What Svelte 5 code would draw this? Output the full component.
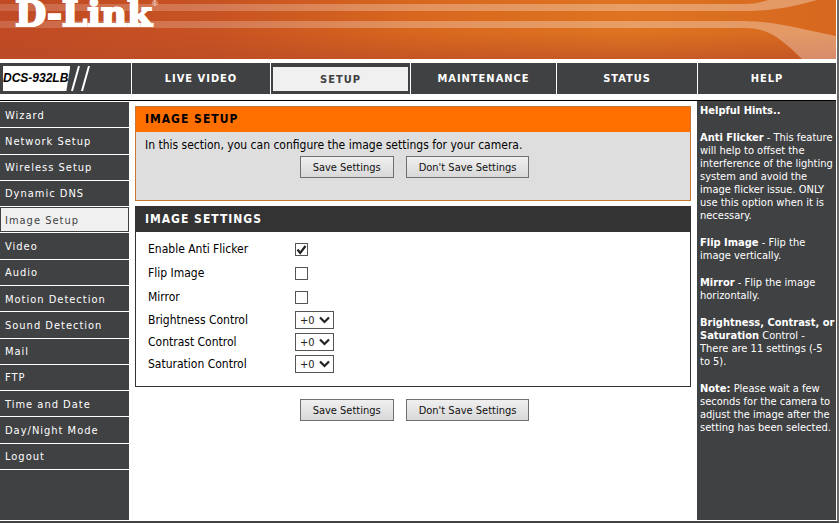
<script lang="ts">
	const tabs = ['LIVE VIDEO', 'SETUP', 'MAINTENANCE', 'STATUS', 'HELP'];
	const activeTab = 'SETUP';

	const menu = [
		'Wizard',
		'Network Setup',
		'Wireless Setup',
		'Dynamic DNS',
		'Image Setup',
		'Video',
		'Audio',
		'Motion Detection',
		'Sound Detection',
		'Mail',
		'FTP',
		'Time and Date',
		'Day/Night Mode',
		'Logout'
	];
	const activeItem = 'Image Setup';

	// -5 to +5
	const levels = Array.from({ length: 11 }, (_, i) => i - 5);

	let toggles = $state([
		{ id: 'flicker', label: 'Enable Anti Flicker', on: true },
		{ id: 'flip', label: 'Flip Image', on: false },
		{ id: 'mirror', label: 'Mirror', on: false }
	]);

	let controls = $state([
		{ id: 'brightness', label: 'Brightness Control', value: 0 },
		{ id: 'contrast', label: 'Contrast Control', value: 0 },
		{ id: 'saturation', label: 'Saturation Control', value: 0 }
	]);

	function reset() {
		toggles.forEach((t) => (t.on = t.id === 'flicker'));
		controls.forEach((c) => (c.value = 0));
	}
</script>

{#snippet buttons()}
	<div class="buttons">
		<button type="button">Save Settings</button>
		<button type="button" onclick={reset}>Don't Save Settings</button>
	</div>
{/snippet}

<div class="page">
	<header class="banner">
		<svg class="art" viewBox="0 0 836 59" preserveAspectRatio="none" aria-hidden="true">
			<defs>
				<linearGradient id="base">
					<stop offset="0" stop-color="#c04a24" />
					<stop offset="0.25" stop-color="#c75222" />
					<stop offset="0.5" stop-color="#d8671e" />
					<stop offset="0.75" stop-color="#de7421" />
					<stop offset="1" stop-color="#d6681f" />
				</linearGradient>
				<linearGradient id="shade" x2="0" y2="1">
					<stop offset="0.55" stop-color="#b84a28" stop-opacity="0" />
					<stop offset="1" stop-color="#b84a28" stop-opacity="0.6" />
				</linearGradient>
				<linearGradient id="beam">
					<stop offset="0" stop-color="#fff" stop-opacity="0.16" />
					<stop offset="0.5" stop-color="#fff" stop-opacity="0.28" />
					<stop offset="1" stop-color="#fff" stop-opacity="0.32" />
				</linearGradient>
			</defs>
			<rect width="836" height="59" fill="url(#base)" />
			<rect width="836" height="59" fill="url(#shade)" />
			<path fill="url(#beam)" d="M0 4H745C755 4 762 2 768 0H817C795 6 775 11 745 11H0Z" />
			<path fill="url(#beam)" d="M0 21H745C780 22 800 29 836 36V59H802C780 38 768 28 745 28H0Z" />
		</svg>
		<div class="brand">D-Link<sup>®</sup></div>
	</header>

	<nav class="tabs">
		<div class="model">
			<span>DCS-932LB</span>
			<svg width="22" height="25" viewBox="0 0 22 25" aria-hidden="true">
				<path d="M9 0L2 25M19 0L12 25" stroke="#fff" stroke-width="2" />
			</svg>
		</div>
		{#each tabs as tab}
			<a href="#top" class:active={tab === activeTab}>{tab}</a>
		{/each}
	</nav>

	<div class="body">
		<aside class="side">
			<ul>
				{#each menu as item}
					<li><a href="#top" class:active={item === activeItem}>{item}</a></li>
				{/each}
			</ul>
		</aside>

		<main>
			<section class="intro">
				<h1>IMAGE SETUP</h1>
				<p>In this section, you can configure the image settings for your camera.</p>
				{@render buttons()}
			</section>

			<section class="settings">
				<h2>IMAGE SETTINGS</h2>
				<div class="rows">
					{#each toggles as t}
						<div class="row">
							<label for={t.id}>{t.label}</label>
							<span class="check">
								<input type="checkbox" id={t.id} bind:checked={t.on} />
								{#if t.on}
									<svg viewBox="0 0 13 13" aria-hidden="true">
										<path d="M2.5 6.5L5.2 10L10.5 3" fill="none" stroke="#222" stroke-width="2.2" />
									</svg>
								{/if}
							</span>
						</div>
					{/each}
					{#each controls as c}
						<div class="row short">
							<label for={c.id}>{c.label}</label>
							<span class="drop">
								<select id={c.id} bind:value={c.value}>
									{#each levels as n}
										<option value={n}>{n < 0 ? n : `+${n}`}</option>
									{/each}
								</select>
								<svg viewBox="0 0 11 8" aria-hidden="true">
									<path d="M1 1.5L5.5 6L10 1.5" fill="none" stroke="#222" stroke-width="2.2" />
								</svg>
							</span>
						</div>
					{/each}
				</div>
			</section>

			{@render buttons()}
		</main>

		<aside class="hints">
			<p><b>Helpful Hints..</b></p>
			<p>
				<b>Anti Flicker</b> - This feature will help to offset the interference of the lighting
				system and avoid the image flicker issue. ONLY use this option when it is necessary.
			</p>
			<p><b>Flip Image</b> - Flip the image vertically.</p>
			<p><b>Mirror</b> - Flip the image horizontally.</p>
			<p>
				<b>Brightness, Contrast, or Saturation</b> Control - There are 11 settings (-5 to 5).
			</p>
			<p>
				<b>Note:</b> Please wait a few seconds for the camera to adjust the image after the
				setting has been selected.
			</p>
		</aside>
	</div>
</div>

<style>
	:global(body) {
		margin: 0;
		background: #fff;
	}

	.page {
		margin-right: 1px;
		padding-right: 1px;
		border-right: 2px solid #6b6b6b;
		border-bottom: 2px solid #404143;
		font-family: Tahoma, 'DejaVu Sans Condensed', 'DejaVu Sans', sans-serif;
		font-size: 12px;
		color: #000;
	}

	h1,
	h2,
	p,
	ul {
		margin: 0;
		padding: 0;
	}

	a {
		text-decoration: none;
	}

	/* banner */
	.banner {
		position: relative;
		height: 59px;
		overflow: hidden;
	}

	.art {
		display: block;
		width: 100%;
		height: 100%;
	}

	.brand {
		position: absolute;
		left: 15px;
		bottom: 32px;
		font: bold 36px/28px 'DejaVu Serif', serif;
		color: #fff;
		-webkit-text-stroke: 2px #fff;
	}

	.brand sup {
		font: 8px/8px 'Liberation Sans', sans-serif;
		vertical-align: 20px;
		-webkit-text-stroke: 0;
	}

	/* top navigation */
	.tabs {
		display: grid;
		grid-template-columns: 131px 138fr 139fr 145fr 140fr 138fr;
		gap: 1px;
		height: 31px;
		margin: 4px 0 6px;
	}

	.tabs a,
	.model {
		display: flex;
		align-items: center;
		background: #404143;
	}

	.tabs a {
		justify-content: center;
		border: 0 solid #404143;
		font-size: 11px;
		font-weight: bold;
		letter-spacing: 1px;
		color: #fff;
	}

	.tabs a.active {
		border-width: 4px 2px 3px;
		background: #f0f0f0;
		color: #404143;
	}

	.model {
		padding-left: 3px;
	}

	.model span {
		padding: 0 2px 0 0;
		background: #fff;
		clip-path: polygon(0 0, 100% 0, calc(100% - 4px) 100%, 0 100%);
		font: italic bold 12px/25px 'Liberation Sans Narrow', 'Liberation Sans', sans-serif;
		color: #000;
	}

	/* columns */
	.body {
		display: grid;
		grid-template-columns: 129px 1fr 139px;
		gap: 6px;
		min-height: 419px;
		padding-bottom: 1px;
		border-top: 1px solid #000;
	}

	.side {
		margin-top: 1px;
		background: #404143;
	}

	.side ul {
		display: grid;
		grid-auto-rows: 1fr;
		min-height: 368px;
		list-style: none;
	}

	.side li {
		display: grid;
		border-bottom: 1px solid #fff;
	}

	.side a {
		display: flex;
		align-items: center;
		padding: 1px 0 0 5px;
		font-size: 11px;
		letter-spacing: 1px;
		color: #fff;
	}

	.side a.active {
		border: 1px solid #404143;
		padding-left: 4px;
		background: #f0f0f0;
		color: #404143;
	}

	main {
		padding-top: 5px;
	}

	h1,
	h2 {
		padding-left: 9px;
		font-size: 12px;
		line-height: 25px;
		letter-spacing: 1px;
	}

	.intro {
		min-height: 93px;
		border: 1px solid #c87830;
		background: #dedede;
	}

	h1 {
		background: #ff6f00;
	}

	.intro p {
		padding: 5px 9px 3px;
		line-height: 16px;
	}

	.settings {
		margin: 5px 0 12px;
		border: 1px solid #333;
	}

	h2 {
		background: #333;
		color: #fff;
	}

	.rows {
		padding: 5px 12px 11px;
	}

	.row {
		display: grid;
		grid-template-columns: 147px 1fr;
		align-items: center;
		height: 24px;
	}

	.row.short {
		height: 22px;
	}

	.check,
	.drop {
		position: relative;
		display: flex;
	}

	.check input {
		appearance: none;
		width: 13px;
		height: 13px;
		margin: 0;
		border: 1px solid #555;
		background: #fff;
	}

	.check svg {
		position: absolute;
		left: 0;
		top: 0;
		width: 13px;
		pointer-events: none;
	}

	.drop select {
		appearance: none;
		width: 39px;
		height: 18px;
		padding: 0 0 0 4px;
		border: 1px solid #555;
		border-radius: 0;
		background: #fff;
		font: inherit;
		font-size: 11px;
		color: #222;
	}

	.drop svg {
		position: absolute;
		left: 24px;
		top: 5px;
		width: 11px;
		pointer-events: none;
	}

	.buttons {
		display: flex;
		justify-content: center;
		gap: 12px;
		padding-left: 3px;
	}

	button {
		height: 22px;
		padding: 0 12px;
		border: 1px solid #707070;
		border-radius: 0;
		background: linear-gradient(#f0f0f0, #d8d8d8);
		font: inherit;
		font-size: 11px;
		color: #111;
	}

	/* help column */
	.hints {
		padding: 3px 1px 0 3px;
		background: #404143;
		font-size: 11px;
		line-height: 13px;
		color: #fff;
	}

	.hints p + p {
		margin-top: 14px;
	}
</style>
